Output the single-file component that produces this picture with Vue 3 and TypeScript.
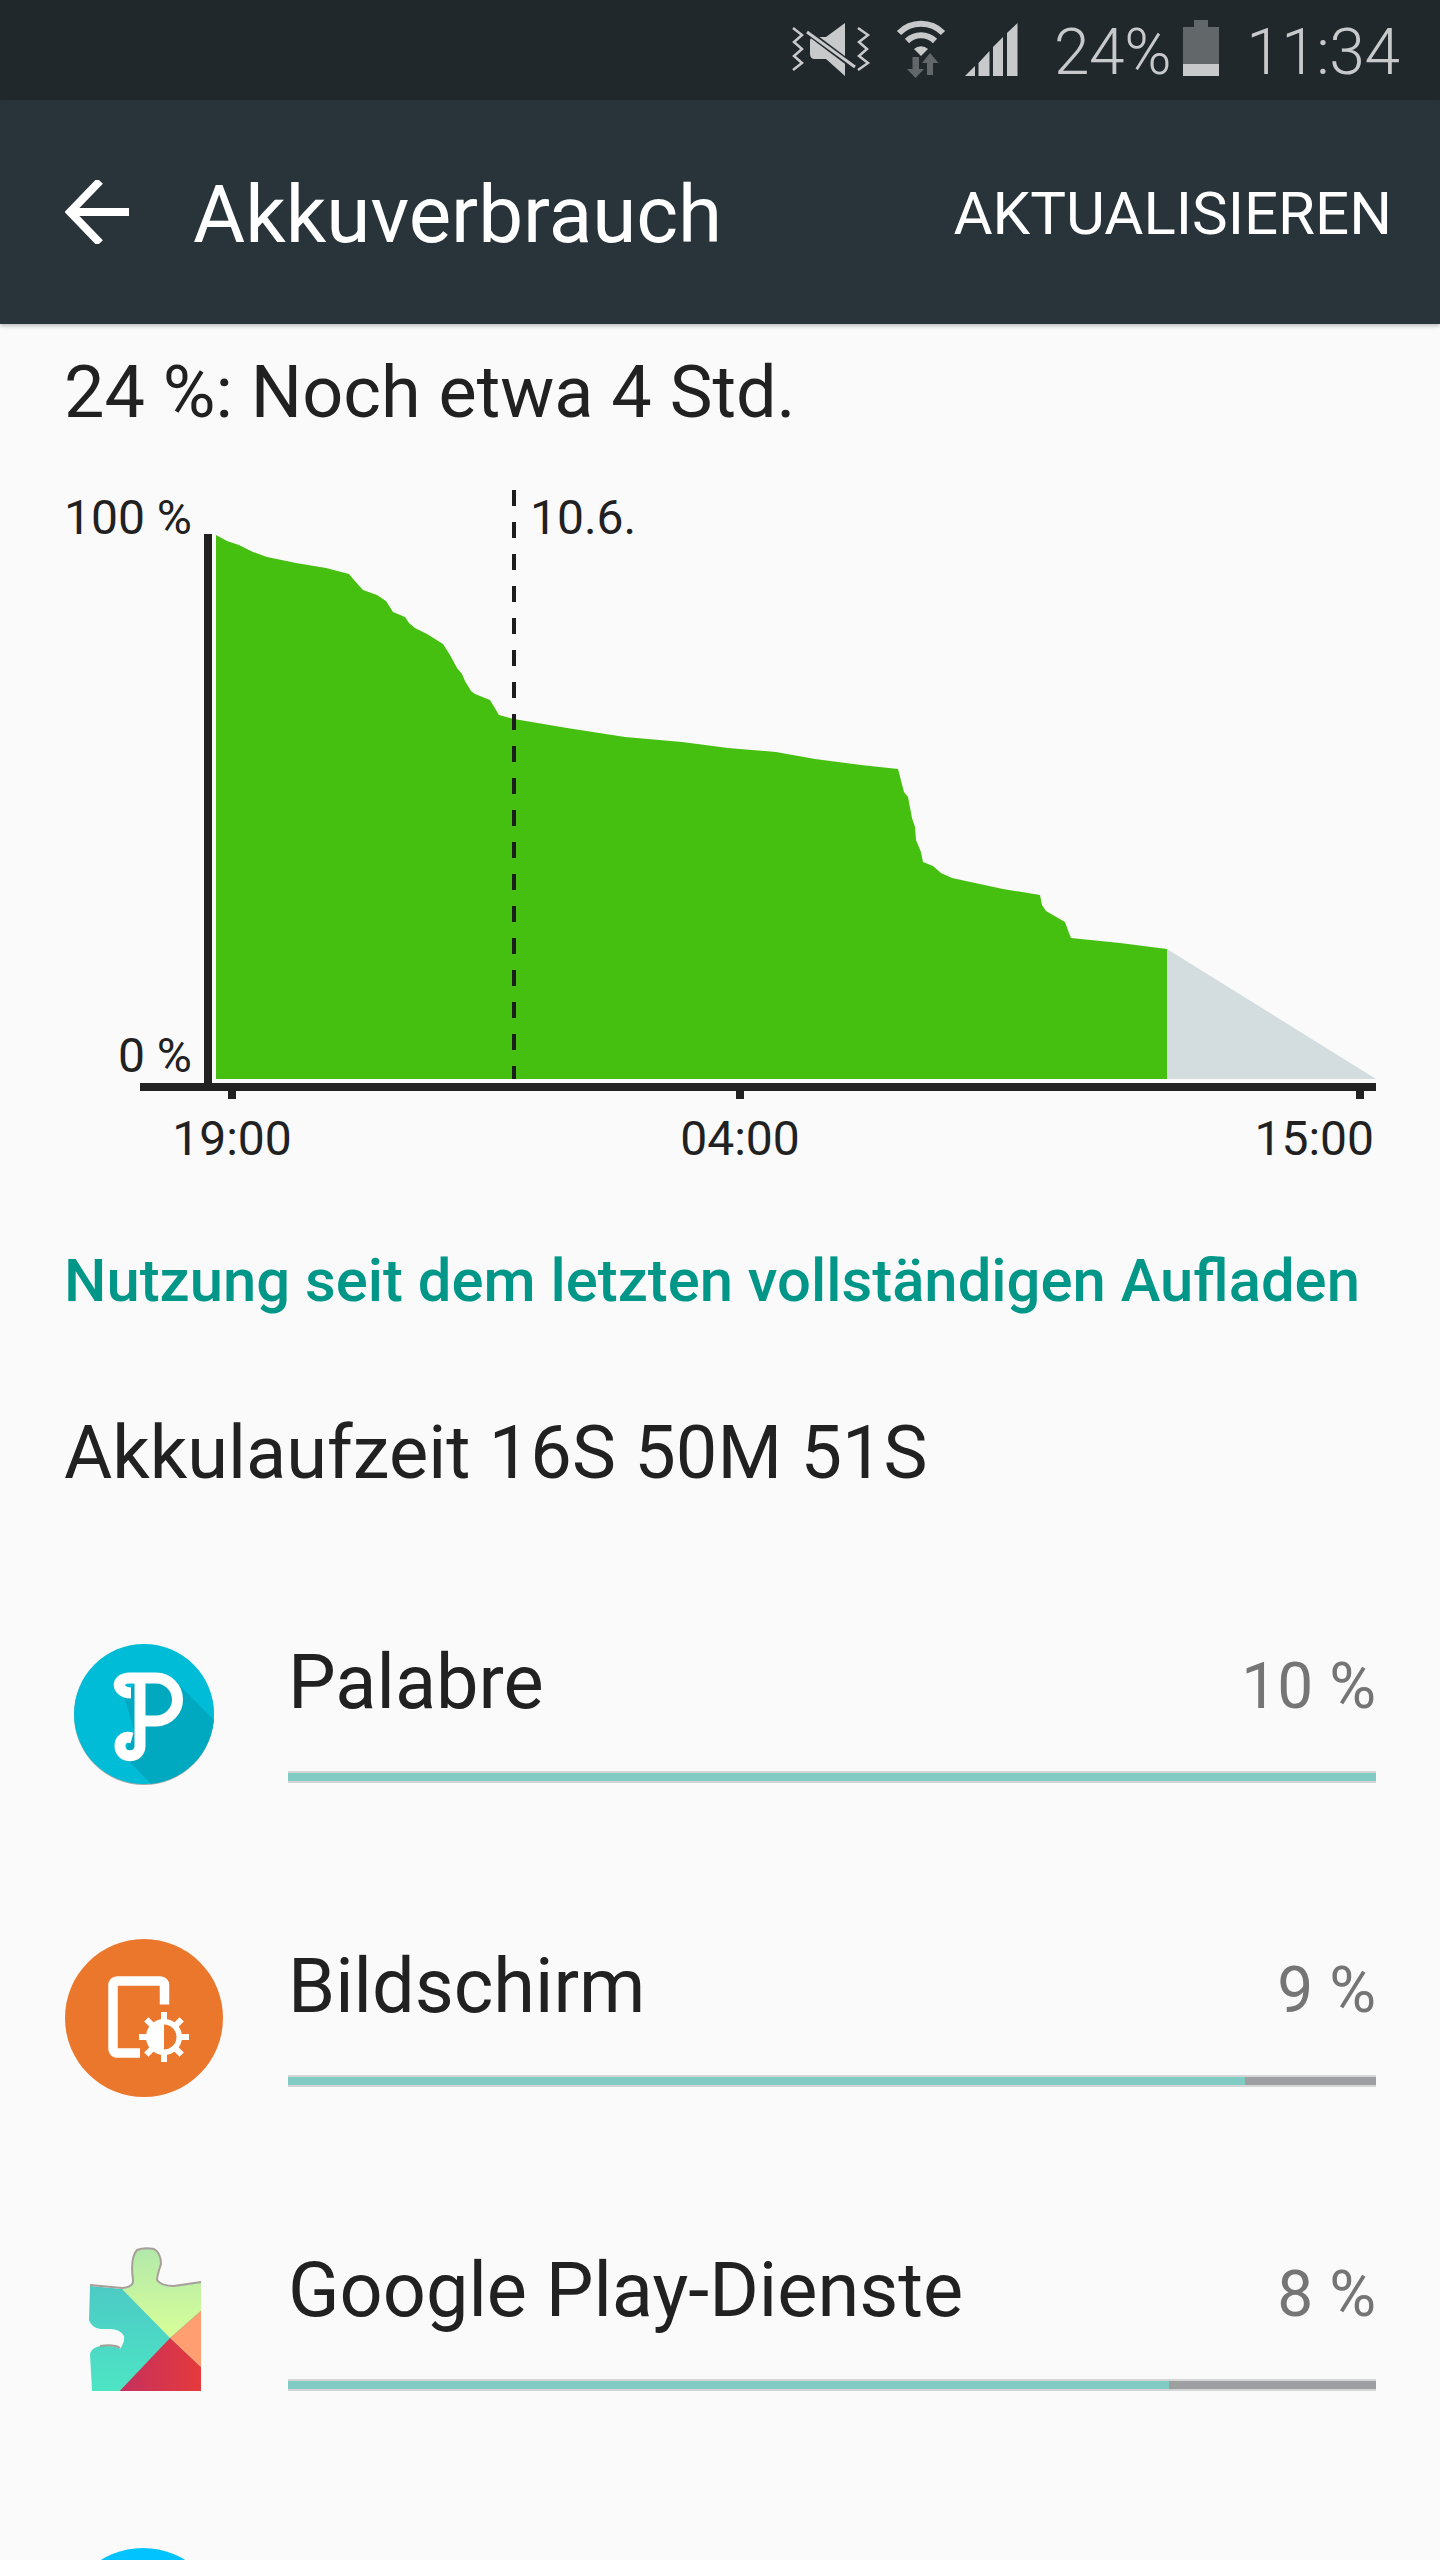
<script setup lang="ts">
type UsageRow = {
  name: string;
  percent: number;
  fill: number;
  icon: string;
};

// page coordinates of the battery curve, y is shifted by the svg's own top
const chartTop = 448;
const curve: [number, number][] = [
  [216, 535], [227, 541], [239, 545], [253, 552], [267, 557], [296, 563], [326, 568], [349, 574],
  [354, 580], [363, 590], [377, 595], [386, 601], [393, 612], [405, 617], [409, 623], [415, 628],
  [427, 634], [443, 644], [450, 655], [457, 668], [462, 674], [465, 681], [471, 691], [475, 694],
  [490, 700], [499, 715], [514, 719], [567, 728], [625, 737], [682, 742], [728, 748], [776, 752],
  [815, 759], [861, 765], [898, 769], [904, 792], [908, 797], [912, 818], [915, 827], [916, 840],
  [921, 852], [923, 862], [933, 866], [941, 873], [952, 878], [1003, 889], [1040, 895], [1042, 905],
  [1046, 911], [1065, 922], [1069, 933], [1071, 938], [1120, 943], [1167, 949],
];

const greenPoints = [[216, 1079], ...curve, [1167, 1079]]
  .map(([x, y]) => `${x},${y - chartTop}`)
  .join(" ");
const greyPoints = [[1167, 949], [1376, 1079], [1167, 1079]]
  .map(([x, y]) => `${x},${y - chartTop}`)
  .join(" ");

const rows: UsageRow[] = [
  { name: "Palabre", percent: 10, fill: 100, icon: "palabre" },
  { name: "Bildschirm", percent: 9, fill: 88, icon: "screen" },
  { name: "Google Play-Dienste", percent: 8, fill: 81, icon: "play" },
];

const gearTeeth = [0, 45, 90, 135, 180, 225, 270, 315];
</script>

<template>
  <div class="page">
    <div class="status-bar">
      <svg class="status-icons" viewBox="780 0 450 100" width="450" height="100">
        <polyline class="zig" points="793,28 802,35 794,42 802,49 794,56 802,63 793,70" />
        <polyline class="zig" points="858,28 868,35 859,42 867,49 859,56 868,63 858,70" />
        <path class="on" d="M845 23V76L826 59H815Q810 59 810 54V41Q810 37 815 37H826Z" />
        <line x1="805" y1="30" x2="857" y2="69" stroke="#21282c" stroke-width="6" />
        <line x1="807" y1="32" x2="855" y2="67" stroke="#c8c9ca" stroke-width="3" />

        <path class="arc" d="M899 33A31 31 0 0 1 943 33" />
        <path class="arc" d="M907 41A20 20 0 0 1 935 41" />
        <path class="on" d="M914 49A10 10 0 0 1 928 49L921 56Z" />
        <path class="off" d="M912.5 57H919V69H924L915.5 78L907 69H912.5Z" />
        <path class="off" d="M927 75H933V63H938.5L930 53L922 63H927Z" />

        <path class="on" d="M965 76L975 66V76Z" />
        <path class="on" d="M978.500 63L989.500 51V76H978.500Z" />
        <path class="on" d="M993 47L1003 37V76H993Z" />
        <path class="on" d="M1007 33L1017.500 23V76H1007Z" />

        <path class="off" d="M1194 20H1208V27H1219V64H1183V27H1194Z" />
        <rect class="on" x="1183" y="64" width="36" height="12" />
      </svg>
      <span class="status-pct">24%</span>
      <span class="status-time">11:34</span>
    </div>

    <header class="app-bar">
      <svg class="back" viewBox="0 0 64 64" width="64" height="64">
        <path d="M64 32H6M35 1L5 32L35 63" fill="none" stroke="#fff" stroke-width="8" />
      </svg>
      <h1>Akkuverbrauch</h1>
      <span class="action">AKTUALISIEREN</span>
    </header>

    <p class="summary">24 %: Noch etwa 4 Std.</p>

    <svg class="chart" viewBox="0 0 1440 752" width="1440" height="752">
      <polygon :points="greenPoints" fill="#45bf10" />
      <polygon :points="greyPoints" fill="#d3dcde" />
      <line x1="514" y1="42" x2="514" y2="631" stroke="#1c1c1c" stroke-width="4" stroke-dasharray="16 16" />
      <rect x="204" y="86" width="8" height="549" fill="#212121" />
      <rect x="140" y="635" width="1236" height="8" fill="#212121" />
      <rect x="228" y="643" width="8" height="8" fill="#212121" />
      <rect x="736" y="643" width="8" height="8" fill="#212121" />
      <rect x="1356" y="643" width="8" height="8" fill="#212121" />
      <text x="192" y="86" text-anchor="end">100 %</text>
      <text x="192" y="624" text-anchor="end">0 %</text>
      <text x="530" y="86">10.6.</text>
      <text x="232" y="707" text-anchor="middle">19:00</text>
      <text x="740" y="707" text-anchor="middle">04:00</text>
      <text x="1374" y="707" text-anchor="end">15:00</text>
    </svg>

    <h2 class="section-title">Nutzung seit dem letzten vollständigen Aufladen</h2>
    <p class="runtime">Akkulaufzeit 16S 50M 51S</p>

    <ul class="usage">
      <li v-for="row in rows" :key="row.name" class="usage-row">
        <svg class="app-icon" viewBox="0 0 160 160" width="160" height="160">
          <template v-if="row.icon === 'palabre'">
            <defs>
              <clipPath id="palabre-clip"><circle cx="80" cy="80" r="70" /></clipPath>
            </defs>
            <circle cx="80" cy="81" r="70" fill="#a9a9a9" />
            <circle cx="80" cy="80" r="70" fill="#00bcd6" />
            <polygon
              points="60,62 76,44 112,48 172,108 172,172 108,172 60,122 70,96"
              fill="#00a8c0"
              clip-path="url(#palabre-clip)"
            />
            <g fill="none" stroke="#fff" stroke-width="11">
              <path d="M67 59C58 59 52 52 57 47C59 45 62 44 66 44H92A21.500 21.500 0 0 1 92 87H76" />
              <path d="M76 44V112C76 125 56 125 56 112C56 105 61 102 68 104" />
            </g>
          </template>

          <template v-else-if="row.icon === 'screen'">
            <circle cx="80" cy="80" r="79" fill="#eb772c" />
            <path
              d="M100.500 66.500V47A4 4 0 0 0 96.500 43H53A4 4 0 0 0 49 47V111A4 4 0 0 0 53 115H76"
              fill="none"
              stroke="#fff"
              stroke-width="9.500"
            />
            <g transform="translate(100 99)">
              <circle r="21" fill="#eb772c" />
              <rect
                v-for="deg in gearTeeth"
                :key="deg"
                x="-3"
                y="-25"
                width="6"
                height="12"
                fill="#fff"
                :transform="`rotate(${deg})`"
              />
              <circle r="18" fill="#fff" />
              <path d="M0 -12.500A12.500 12.500 0 0 1 0 12.500Z" fill="#eb772c" />
            </g>
          </template>

          <template v-else>
            <defs>
              <clipPath id="puzzle-clip">
                <path
                  d="M26 44L58 47Q70 46 70 39Q66 16 73 9Q80 6 90 8Q97 12 96 22Q93 34 93 39Q97 45 110 45L137 41V149H28L26 112Q27 106 36 104Q50 103 56 107Q61 100 60 94Q56 87 46 87H36Q27 85 25 78Z"
                />
              </clipPath>
              <linearGradient id="teal-fill" x1="0" y1="0" x2="0" y2="1">
                <stop offset="0" stop-color="#4cbfc6" />
                <stop offset="1" stop-color="#4de6c4" />
              </linearGradient>
              <linearGradient id="lime-fill" x1="0" y1="0" x2="0" y2="1">
                <stop offset="0" stop-color="#afe6ab" />
                <stop offset="1" stop-color="#d8ff98" />
              </linearGradient>
              <linearGradient id="red-fill" x1="0" y1="0" x2="1" y2="0">
                <stop offset="0" stop-color="#c2305f" />
                <stop offset="1" stop-color="#e63a3c" />
              </linearGradient>
            </defs>
            <g clip-path="url(#puzzle-clip)">
              <rect x="20" y="0" width="120" height="155" fill="url(#teal-fill)" />
              <polygon points="58,47 58,0 140,0 140,66 106,96" fill="url(#lime-fill)" />
              <polygon points="140,66 106,96 140,128" fill="#ff9e70" />
              <polygon points="106,96 140,128 140,155 50,155" fill="url(#red-fill)" />
            </g>
            <path
              d="M26 43L58 46Q70 45 69 38Q66 16 73 8Q80 5 90 7Q97 11 97 22Q93 34 93 38Q97 44 110 44L137 40M36 104Q50 102 56 106"
              fill="none"
              stroke="#a79f98"
              stroke-width="2"
            />
          </template>
        </svg>

        <div class="usage-body">
          <div class="usage-head">
            <span class="usage-name">{{ row.name }}</span>
            <span class="usage-pct">{{ row.percent }} %</span>
          </div>
          <div class="usage-bar">
            <div class="usage-fill" :style="{ width: `${row.fill}%` }"></div>
          </div>
        </div>
      </li>
      <!-- next row only peeks in at the bottom edge -->
      <li class="usage-row">
        <svg class="app-icon" viewBox="0 0 160 160" width="160" height="160">
          <circle cx="79" cy="82" r="80" fill="#00c3ff" />
        </svg>
      </li>
    </ul>
  </div>
</template>

<style>
html,
body {
  margin: 0;
  background: #fafafa;
}
</style>

<style scoped>
.page {
  width: 1440px;
  height: 2560px;
  overflow: hidden;
  background: #fafafa;
  color: #212121;
  font-family: Roboto, "Liberation Sans", sans-serif;
}

.status-bar {
  height: 100px;
  background: #21282c;
  display: flex;
  align-items: flex-start;
  color: #c8c9ca;
  font-weight: 300;
  font-size: 64px;
  line-height: 106px;
  position: relative;
}

.status-icons {
  position: absolute;
  left: 780px;
  top: 0;
}

.status-pct {
  margin-left: 1054px;
  letter-spacing: -0.4px;
}

.status-time {
  margin-left: 75px;
  letter-spacing: -0.4px;
}

.app-bar {
  height: 224px;
  background: #29343a;
  display: flex;
  align-items: center;
  padding: 0 48px 0 65px;
  box-shadow: 0 2px 4px rgba(0, 0, 0, 0.25);
  position: relative;
  color: #fff;
}

.back {
  flex: none;
}

.app-bar h1 {
  margin: 0 0 0 64px;
  font-size: 80px;
  font-weight: 400;
  flex: 1;
  line-height: 100px;
  padding-top: 6px;
}

.action {
  font-size: 60px;
  padding-top: 3px;
}

.summary {
  margin: 0;
  height: 124px;
  padding-left: 64px;
  font-size: 72px;
  line-height: 137px;
}

.chart {
  display: block;
}

.chart text {
  font-size: 48px;
  fill: #212121;
}

.section-title {
  margin: 0;
  height: 140px;
  padding: 21px 0 0 64px;
  box-sizing: border-box;
  font-size: 59.8px;
  font-weight: 500;
  line-height: 120px;
  color: #009688;
}

.runtime {
  margin: 0;
  height: 294px;
  padding: 53px 0 0 64px;
  box-sizing: border-box;
  font-size: 74px;
  line-height: 120px;
}

.usage {
  list-style: none;
  margin: 0;
  padding: 0 64px;
}

.usage-row {
  display: flex;
  gap: 64px;
  height: 304px;
}

.app-icon {
  flex: none;
}

.usage-body {
  flex: 1;
}

.usage-head {
  display: flex;
  justify-content: space-between;
  align-items: baseline;
  height: 137px;
  line-height: 96px;
}

.usage-name {
  font-size: 75.7px;
}

.usage-pct {
  font-size: 64px;
  color: #757575;
}

.usage-bar {
  height: 12px;
  box-sizing: border-box;
  background: #9e9fa0;
  border-top: 2px solid #d4d5d5;
  border-bottom: 2px solid #d4d5d5;
}

.usage-fill {
  height: 8px;
  background: #80cbc4;
}

.zig {
  fill: none;
  stroke: #c8c9ca;
  stroke-width: 2.5;
}

.on {
  fill: #c8c9ca;
}

.off {
  fill: #62676a;
}

.arc {
  fill: none;
  stroke: #c8c9ca;
  stroke-width: 6;
}
</style>
